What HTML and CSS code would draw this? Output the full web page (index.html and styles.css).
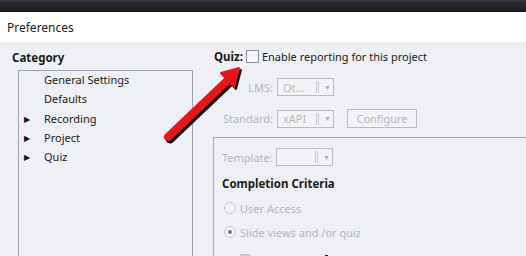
FILE: index.html
```html
<!DOCTYPE html>
<html>
<head>
<meta charset="utf-8">
<link rel="stylesheet" href="styles.css">
</head>
<body>
<div class="topbar"></div>
<div class="titlebar">Preferences</div>
<div class="main">
  <div class="left">
    <div class="cat-title">Category</div>
    <div class="tree">
      <div class="item"><span class="tri"></span>General Settings</div>
      <div class="item"><span class="tri"></span>Defaults</div>
      <div class="item"><span class="tri on">&#9654;</span>Recording</div>
      <div class="item"><span class="tri on">&#9654;</span>Project</div>
      <div class="item"><span class="tri on">&#9654;</span>Quiz</div>
    </div>
  </div>
  <div class="right">
    <div class="quizrow"><span class="quiz-label">Quiz:</span><span class="chk"></span><span>Enable reporting for this project</span></div>
    <div class="row lms"><span class="lbl">LMS:</span><span class="dd"><span class="dd-t">Ot...</span><span class="dd-sep"></span><span class="dd-a">&#9660;</span></span></div>
    <div class="row std"><span class="lbl">Standard:</span><span class="dd"><span class="dd-t">xAPI</span><span class="dd-sep"></span><span class="dd-a">&#9660;</span></span><span class="btn">Configure</span></div>
    <div class="group">
      <div class="row tpl"><span class="lbl2">Template:</span><span class="dd"><span class="dd-t"></span><span class="dd-sep"></span><span class="dd-a">&#9660;</span></span></div>
      <div class="cc">Completion Criteria</div>
      <div class="radio"><span class="rb"></span>User Access</div>
      <div class="radio"><span class="rb sel"></span>Slide views and /or quiz</div>
      <div class="sub"><span class="sq"></span>Slide Views <span class="dot"></span> Quiz</div>
    </div>
  </div>
  <svg class="arrow" width="100" height="110" viewBox="0 0 100 110">
    <g transform="translate(2,2)" fill="#111" stroke="#111">
      <path d="M10 95 L70 38" stroke-width="9" stroke-linecap="round" fill="none"/>
      <path d="M63 31 L81 26 L76 45 Z" stroke-width="2" stroke-linejoin="round"/>
    </g>
    <g fill="#e8141c" stroke="#e8141c">
      <path d="M10 95 L70 38" stroke-width="8" stroke-linecap="round" fill="none"/>
      <path d="M63 31 L81 26 L76 45 Z" stroke-width="2" stroke-linejoin="round"/>
    </g>
  </svg>
</div>
</body>
</html>
```
FILE: styles.css
```css
* { box-sizing: border-box; }
body {
  margin: 0;
  width: 526px;
  height: 256px;
  overflow: hidden;
  font-family: "Noto Sans", "Open Sans", sans-serif;
  font-size: 11px;
  color: #1a1a1a;
  background: #eff0f5;
}
.topbar {
  height: 12px;
  background: linear-gradient(#3a3b40 0, #3a3b40 1px, #2a2b30 2px, #1d1e23 12px);
  border-bottom: 1px solid #141518;
}
.titlebar {
  height: 30px;
  background: #fff;
  padding-left: 7px;
  display: flex;
  align-items: center;
  font-size: 12px;
  color: #222;
}
.main {
  position: relative;
  display: flex;
  height: 214px;
  overflow: hidden;
}
.left {
  width: 206px;
  padding: 8px 0 0 12px;
}
.cat-title {
  font-weight: bold;
  font-size: 11.5px;
  height: 16px;
  line-height: 16px;
}
.tree {
  margin: 4px 0 0 6px;
  width: 175px;
  height: 200px;
  border: 1px solid #9ea2b0;
  border-bottom: none;
}
.item {
  height: 19.3px;
  display: flex;
  align-items: center;
}
.item:first-child { margin-top: -1px; }
.tri {
  width: 25px;
  padding-left: 5px;
  font-size: 8px;
  color: #111;
}
.right {
  flex: 1;
  padding: 6px 0 0 8px;
}
.quizrow {
  display: flex;
  align-items: center;
  height: 16px;
}
.quiz-label {
  font-weight: bold;
  font-size: 11.5px;
  margin-right: 3px;
}
.chk {
  width: 13px;
  height: 13px;
  border: 1px solid #8b8f9c;
  background: #f6f6f8;
  margin-right: 3px;
}
.row {
  display: flex;
  align-items: center;
  color: #b4b6bd;
}
.lms { margin-top: 14px; height: 18px; }
.std { margin-top: 13px; height: 19px; }
.lbl {
  width: 63px;
  text-align: right;
  padding-right: 4px;
}
.lbl2 {
  width: 62px;
  padding-left: 8px;
  text-align: left;
}
.dd {
  width: 57px;
  height: 18px;
  border: 1px solid #b9bbc3;
  display: flex;
  align-items: center;
  background: #f3f3f6;
}
.dd-t {
  width: 38px;
  padding-left: 5px;
}
.dd-sep {
  width: 3px;
  height: 12px;
  border-left: 1px solid #c7c8ce;
  border-right: 1px solid #c7c8ce;
}
.dd-a {
  font-size: 7px;
  margin-left: 5px;
  color: #a8aab1;
}
.btn {
  margin-left: 13px;
  width: 70px;
  height: 19px;
  border: 1px solid #b9bbc3;
  display: flex;
  align-items: center;
  justify-content: center;
  background: #f3f3f6;
}
.group {
  margin-top: 9px;
  margin-left: -1px;
  border-top: 1px solid #a4a8b6;
  border-left: 1px solid #a4a8b6;
  height: 130px;
}
.tpl { margin-top: 10px; height: 18px; }
.cc {
  font-weight: bold;
  font-size: 11.5px;
  padding-left: 8px;
  margin-top: 10px;
  height: 16px;
  line-height: 16px;
}
.radio {
  display: flex;
  align-items: center;
  color: #b4b6bd;
  height: 16px;
  padding-left: 10px;
  margin-top: 8px;
}
.radio + .radio { margin-top: 8px; }
.rb {
  width: 12px;
  height: 12px;
  border-radius: 50%;
  border: 1px solid #c3c5cc;
  background: #f4f4f7;
  margin-right: 4px;
  position: relative;
}
.rb.sel::after {
  content: "";
  position: absolute;
  left: 3px;
  top: 3px;
  width: 4px;
  height: 4px;
  border-radius: 50%;
  background: #777;
}
.sub {
  display: flex;
  align-items: center;
  color: #b4b6bd;
  padding-left: 26px;
  margin-top: 12px;
  height: 14px;
}
.sq {
  width: 10px;
  height: 10px;
  background: #c6c7cc;
  margin-right: 6px;
}
.dot {
  display: inline-block;
  width: 3px;
  height: 8px;
  background: #222;
  margin: 0 12px;
}
.arrow {
  position: absolute;
  left: 158px;
  top: 0;
}
```
